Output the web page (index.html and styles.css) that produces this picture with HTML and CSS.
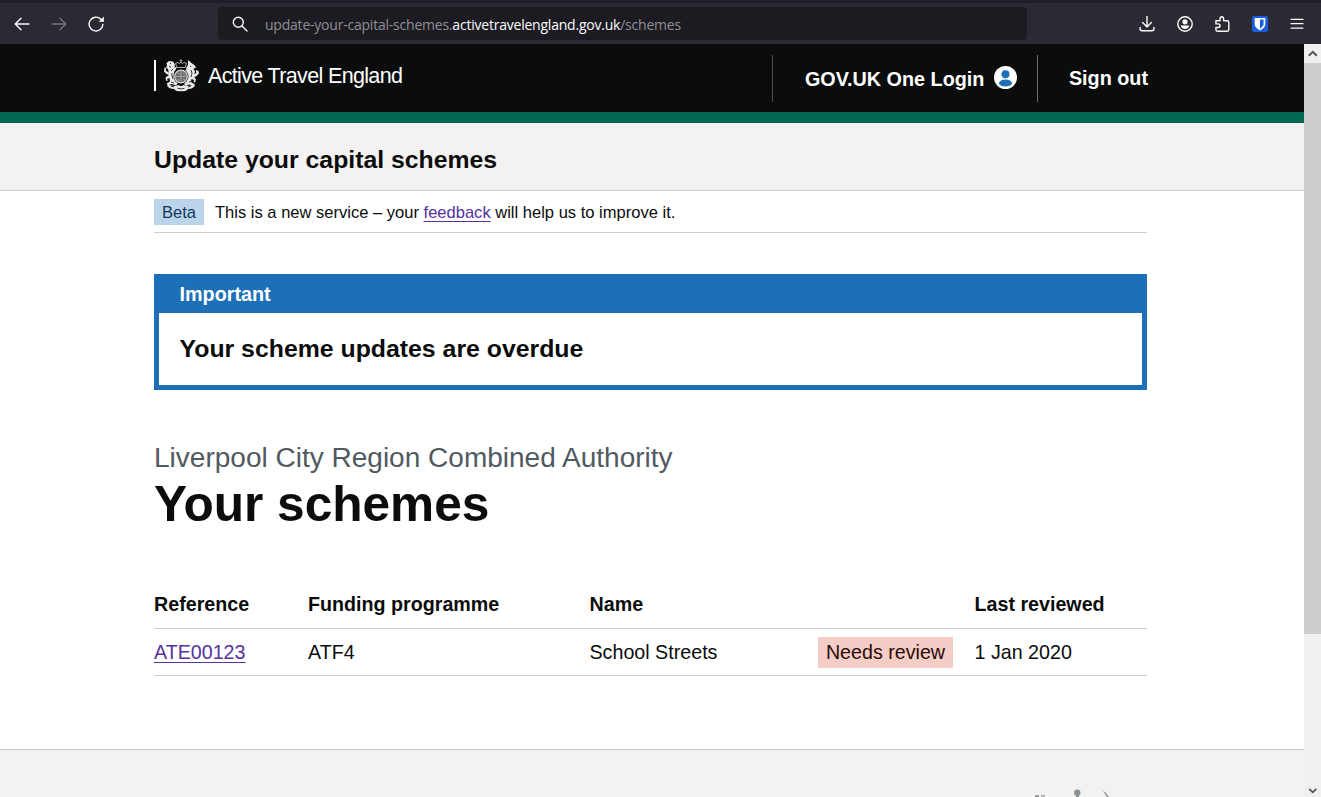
FILE: index.html
```html
<!DOCTYPE html>
<html lang="en">
<head>
<meta charset="utf-8">
<title>Your schemes - Update your capital schemes</title>
<link rel="stylesheet" href="styles.css">
</head>
<body>
<div class="toolbar">
  <div class="nav-icons">
    <svg class="icon" viewBox="0 0 16 16"><path d="M15 8H1.3M7 2.3 1.2 8 7 13.7"/></svg>
    <svg class="icon icon-dim" viewBox="0 0 16 16"><path d="M1 8h13.7M9 2.3 14.8 8 9 13.7"/></svg>
    <svg class="icon" viewBox="0 0 16 16"><path d="M14.9 8.5A6.9 6.9 0 1 1 12.9 3.2L14.4 5"/><path class="solid" d="M15.9.6v5.2h-5.2z"/></svg>
  </div>
  <div class="address">
    <svg class="icon" viewBox="0 0 16 16"><circle cx="6.3" cy="6.2" r="5"/><path d="m10 10 5 5"/></svg>
    <span class="url">update-your-capital-schemes.<b>activetravelengland.gov.uk</b>/schemes</span>
  </div>
  <div class="tool-icons">
    <svg class="icon" viewBox="0 0 16 16"><path d="M8 .3v10.5M3.6 6.6 8 11l4.4-4.4M1.1 11.5v1.3q0 2 2 2h9.8q2 0 2-2v-1.3"/></svg>
    <svg class="icon" viewBox="0 0 16 16"><circle cx="8" cy="8" r="7.2"/><circle class="solid" cx="8" cy="5.8" r="2.6"/><path class="solid" d="M3.7 9.5h8.6q-.7 3.4-4.3 3.4T3.7 9.5z"/></svg>
    <svg class="icon" viewBox="0 0 16 16"><path d="M1.9 7V4.7H6V3q0-2.3 1.8-2.3T9.6 3v1.7h3.7q1.500 0 1.500 1.500v7.400q0 1.600-1.500 1.600H3.500q-1.600 0-1.600-1.600v-2.100h2.100q2 0 2-1.800T4 7.900H1.900"/></svg>
    <svg class="icon" viewBox="0 0 16 16"><rect class="shield-bg" width="16" height="16" rx="2"/><path class="shield" d="M2.7 2h10.6v6.2q0 3.5-5.3 6.2-5.3-2.7-5.3-6.2z"/><path class="shield-in" d="M8 3.5h3.6v4.8q0 2.2-3.6 4.4z"/></svg>
    <svg class="icon icon-menu" viewBox="0 0 16 16"><path d="M2 3.3h12M2 7.7h12M2 12.1h12"/></svg>
  </div>
</div>
<div class="viewport">
  <div class="page">
    <header class="header">
      <div class="container header-row">
        <div class="brand">
          <svg class="crest" viewBox="0 0 37 33">
            <g fill="#e8e9e9">
              <path d="M3.5 4 6 2l4 .5 2 3-.6 3L14 8l-1.5 3-1.5 2 .5 4 1 4 2.5 3-2 2.5-4-1.5-3.5 1L3.5 24.5 7 22.5 6.500 19 4 20l1 2-2-.5-.5-3L6 16l-2.500-1L1 12.500l.5-4 1.600.5-.3 2.500 3 2.300L5 10l-2-1.500 1-1.500z"/>
              <path d="M25 1l3.500 3L32 6.500l1 2.500-2.500.5 1.500 3-.8 2.500 2-1-.2-3 2.500 1 .5 2.500-3 3-1.700.5 1.700 2.500-1 3-1.500-.5.500-2-2.500-1-.5 3 3 2-1.500 1.500-3.500-1-3 1.500-2-2 2.500-3 1-4-2-2.500-1-2.500-1.500-2 3 .5.500-3.500 1.500-2z"/>
              <path d="M5 24.500q2 2.500 7 2.500l3.500-1q2.500 2 5 0l3.500 1q5 0 7-2.500l1 2q-2 3.500-7 3.500l-2 1.800q-5 1-10 0L11 30q-5 0-7-3.500z"/>
            </g>
            <g fill="none" stroke="#0b0c0c" stroke-width=".8">
              <path d="M7 4l1 1M6 7l2 1.500M10 10l-2 2M9 14v3l1 3M8 23l3 1M28 7l-1 1M28 11l1 3-1 4M26 23l3-1M14.500 29.300q3.500 1.200 7 0M8 27l3 1M28 27l-3 1"/>
            </g>
            <path d="M12.500 4.300 15 3.500l1.500 1L18 3l1.500 1.500L21 3.500l2.500.8-1.400 4.200h-8.200zM18 .3v4M16.700 1.600h2.600" fill="none" stroke="#a9abab" stroke-width="1"/>
            <circle cx="18" cy="17.500" r="7.500" fill="#0b0c0c"/>
            <circle cx="18" cy="17.500" r="6.300" fill="#6a6c6c" stroke="#d7d8d8" stroke-width="1.200"/>
            <path d="M18 12v11M13 17.500h10M14.500 14l2 1.500M20 14l2 2M14.500 20.500l2 1M20 20l2 1" fill="none" stroke="#a9abab" stroke-width=".9"/>
          </svg>
          <span class="brand-name">Active Travel England</span>
        </div>
        <nav class="account">
          <a class="login">GOV.UK One Login
            <svg class="avatar" viewBox="0 0 23 23"><circle cx="11.5" cy="11.5" r="11.5" fill="#fff"/><circle cx="11.5" cy="8.2" r="4" fill="#1d70b8"/><path d="M4.7 17.2q1.3-3.8 6.8-3.8t6.8 3.8q-2.200 3.300-6.800 3.300t-6.800-3.300z" fill="#1d70b8"/></svg>
          </a>
          <a class="signout">Sign out</a>
        </nav>
      </div>
    </header>
    <div class="service"><div class="container"><span class="service-name">Update your capital schemes</span></div></div>
    <main class="container">
      <div class="phase"><span class="phase-tag">Beta</span><span class="phase-text">This is a new service – your <a class="link">feedback</a> will help us to improve it.</span></div>
      <section class="banner">
        <h2 class="banner-title"><span>Important</span></h2>
        <p class="banner-body"><span>Your scheme updates are overdue</span></p>
      </section>
      <div class="caption"><span>Liverpool City Region Combined Authority</span></div>
      <h1 class="heading"><span>Your schemes</span></h1>
      <div class="table">
        <div class="row row-head"><span>Reference</span><span>Funding programme</span><span>Name</span><span></span><span>Last reviewed</span></div>
        <div class="row"><span><a class="link">ATE00123</a></span><span>ATF4</span><span>School Streets</span><span class="tag">Needs review</span><span>1 Jan 2020</span></div>
      </div>
    </main>
    <footer class="footer">
      <svg class="footer-crest" viewBox="0 0 80 8"><g fill="#8a9194"><path d="M0 6.300h4v1.700H0zM6 6.300h4v1.200H6z"/><circle cx="42.300" cy="3.800" r="3.200"/><path d="M41 6h3v2h-3zM68 2l2 1 4 5h-2z"/></g></svg>
    </footer>
  </div>
  <div class="scrollbar">
    <svg class="arrow" viewBox="0 0 17 19"><path d="m4.800 11.800 4-4 4 4"/></svg>
    <div class="thumb"></div>
    <svg class="arrow arrow-down" viewBox="0 0 17 19"><path d="m4.800 9.800 4 4 4-4"/></svg>
  </div>
</div>
</body>
</html>
```
FILE: styles.css
```css
* { box-sizing: border-box; }
body { margin: 0; height: 797px; overflow: hidden; font-family: "Liberation Sans", Arial, sans-serif; color: #0b0c0c; background: #fff; }
.toolbar { height: 44px; display: flex; align-items: center; padding: 3px 16px 0 14px; background: linear-gradient(#1f1e25 3px, #2b2a33 3px); }
.nav-icons { display: flex; gap: 21.2px; width: 204px; }
.icon { width: 16px; height: 16px; flex: none; fill: none; stroke: #fbfbfe; stroke-width: 1.4; stroke-linecap: round; stroke-linejoin: round; }
.icon-dim { stroke: #77767d; }
.solid { fill: #fbfbfe; stroke: none; }
.shield-bg { fill: #175ddc; stroke: none; }
.shield { fill: #fff; stroke: none; }
.shield-in { fill: #175ddc; stroke: none; }
.icon-menu { stroke-width: 1.2; }
.address { width: 809px; height: 33px; display: flex; align-items: center; gap: 17px; padding-left: 14px; border-radius: 4px; background: #1c1b22; }
.url { font: 14px/20px "Open Sans", "Noto Sans", sans-serif; color: #8f8e95; white-space: nowrap; letter-spacing: -.22px; padding-top: 2px; }
.url b { font-weight: 400; color: #fbfbfe; }
.tool-icons { display: flex; gap: 21.5px; margin-left: auto; }
.viewport { height: 753px; display: flex; }
.page { width: 1304px; display: flex; flex-direction: column; }
.container { width: 993px; margin-left: 154px; white-space: nowrap; }
.header { height: 79px; flex: none; background: #0b0c0c; border-bottom: 11px solid #006853; }
.header-row { height: 68px; display: flex; justify-content: space-between; }
.brand { height: 31px; margin-top: 16px; display: flex; align-items: center; border-left: 2px solid #fff; padding-left: 7px; }
.crest { width: 37px; height: 33px; }
.brand-name { margin-left: 8px; color: #fff; font-size: 21.5px; line-height: 31px; letter-spacing: -.65px; padding-top: 2px; }
.account { display: flex; height: 47px; margin-top: 11px; color: #fff; font-size: 19.8px; font-weight: 700; line-height: 46px; }
.login { width: 266px; padding-left: 32px; border-left: 1px solid #505151; border-right: 1px solid #686969; display: flex; align-items: center; gap: 10px; }
.avatar { width: 23px; height: 23px; margin-top: -3px; }
.signout { padding-left: 31px; margin-right: -1px; }
.service { height: 68px; flex: none; background: #f3f2f1; border-bottom: 1px solid #cecece; }
.service-name { font-size: 24.8px; font-weight: 700; line-height: 73px; }
.phase { height: 42px; border-bottom: 1px solid #cecece; display: flex; align-items: center; font-size: 16.55px; }
.phase-tag { width: 50px; height: 26px; line-height: 27px; text-align: center; background: #bbd4ea; color: #0f385c; margin-right: 11px; }
.phase-text { padding-top: 2px; }
.link { color: #54319f; text-decoration: underline; text-decoration-thickness: 1px; text-underline-offset: 3px; }
.banner { height: 116px; margin: 41px 0 0; border: 5px solid #1d70b8; border-top: 0; }
.banner-title { height: 38.5px; margin: 0; padding-left: 20.5px; background: #1d70b8; color: #fff; font-size: 19.8px; line-height: 40px; }
.banner-body { margin: 0; padding-left: 20.5px; font-size: 24.83px; font-weight: 700; line-height: 71px; }
.caption { margin-top: 51px; color: #505a5f; font-size: 28.02px; line-height: 34px; }
.heading { margin: 0; font-size: 49.6px; line-height: 59px; }
.table { margin-top: 47px; font-size: 19.68px; }
.row { display: grid; grid-template-columns: 154px 281.5px 228.5px 156.5px 1fr; align-items: center; height: 47px; border-bottom: 1px solid #cecece; }
.row-head { height: 48px; font-weight: 700; }
.tag { justify-self: start; width: 135px; height: 31px; line-height: 31px; text-align: center; background: #f4cdc6; color: #2a0b06; }
.footer { margin-top: auto; height: 48px; background: #f3f2f1; border-top: 1px solid #cecece; display: flex; align-items: flex-end; padding-left: 1035px; }
.footer-crest { width: 80px; height: 8px; }
.scrollbar { width: 17px; background: #f0f0f0; display: flex; flex-direction: column; }
.arrow { width: 17px; height: 19px; fill: none; stroke: #555; stroke-width: 2; }
.thumb { height: 571px; background: #cdcdcd; }
.arrow-down { margin-top: auto; height: 17px; }
```
